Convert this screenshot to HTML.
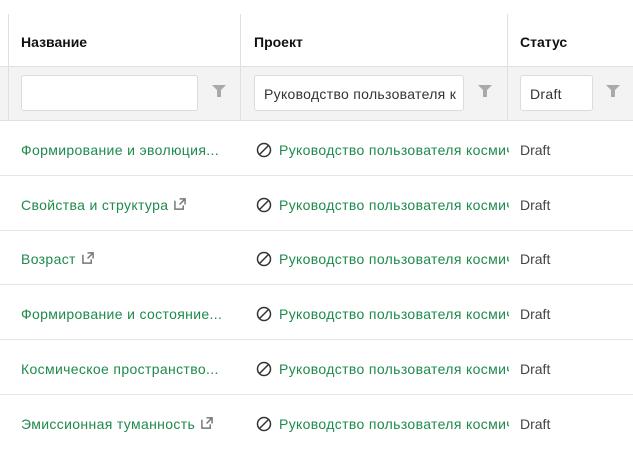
<!DOCTYPE html>
<html><head><meta charset="utf-8"><style>
body{margin:0;width:633px;height:442px;overflow:hidden;background:#fff;font-family:"Liberation Sans",sans-serif;font-size:14px;position:relative}
.a{position:absolute}
.vl{position:absolute;width:1px;background:#e0e0e0;top:14px;height:106px}
.hl{position:absolute;left:0;width:633px;height:1px;background:#e6e6e6}
.h{position:absolute;top:34px;font-weight:bold;color:#111}
.in{position:absolute;top:75px;height:36px;border:1px solid #dcdcdc;border-radius:3px;background:#fff;box-sizing:border-box;padding:0 9px;line-height:36px;color:#333;white-space:nowrap;overflow:hidden;letter-spacing:0.3px}
.f{position:absolute;top:84px}
.g{color:#1e8a4c;white-space:nowrap;overflow:hidden;letter-spacing:0.35px}
.d{color:#444}
.c{position:absolute;height:55px;line-height:60px}
</style></head><body>
<div class="a" style="left:0;top:66px;width:633px;height:54px;background:#f3f3f3"></div>
<div class="hl" style="top:66px;background:#e0e0e0"></div>
<div class="hl" style="top:120px;background:#e0e0e0"></div>
<div class="vl" style="left:8px"></div><div class="vl" style="left:240px"></div><div class="vl" style="left:507px"></div>
<div class="h" style="left:21px">Название</div>
<div class="h" style="left:254px">Проект</div>
<div class="h" style="left:520px">Статус</div>
<div class="in" style="left:21px;width:177px"></div>
<div class="in" style="left:254px;width:210px">Руководство пользователя к</div>
<div class="in" style="left:520px;width:73px">Draft</div>
<svg class="f" style="left:212px" width="14" height="14" viewBox="0 0 14 14"><path d="M0 1h14L9 6v7H5V6z" fill="#aaa"/></svg>
<svg class="f" style="left:478px" width="14" height="14" viewBox="0 0 14 14"><path d="M0 1h14L9 6v7H5V6z" fill="#aaa"/></svg>
<svg class="f" style="left:606px" width="14" height="14" viewBox="0 0 14 14"><path d="M0 1h14L9 6v7H5V6z" fill="#aaa"/></svg>
<div id="rows"></div>
<script>
var n=[["Формирование и эволюция...",0],["Свойства и структура",1],["Возраст",1],["Формирование и состояние...",0],["Космическое пространство...",0],["Эмиссионная туманность",1]];
var ext='<svg width="12" height="12" viewBox="0 0 13 13" style="margin-left:6px;vertical-align:0px"><path d="M1 3v9h9V8M6 1h6v6M12 1L6 7" fill="none" stroke="#777" stroke-width="1.6"/></svg>';
var ban='<svg width="16" height="16" viewBox="0 0 16 16" style="vertical-align:-3px;margin-right:7px"><circle cx="8" cy="8" r="6.5" fill="none" stroke="#333" stroke-width="1.5"/><path d="M3.5 12.5L12.5 3.5" stroke="#333" stroke-width="1.5"/></svg>';
var h='';
for(var i=0;i<6;i++){var t=120+i*54.7;
h+='<div class="c g" style="left:21px;top:'+t+'px;width:215px">'+n[i][0]+(n[i][1]?ext:'')+'</div>';
h+='<div class="c g" style="left:256px;top:'+t+'px;width:253px">'+ban+'Руководство пользователя космического</div>';
h+='<div class="c d" style="left:520px;top:'+t+'px">Draft</div>';
if(i<5)h+='<div class="hl" style="top:'+Math.round(t+55)+'px"></div>';}
document.getElementById('rows').innerHTML=h;
</script>
</body></html>
